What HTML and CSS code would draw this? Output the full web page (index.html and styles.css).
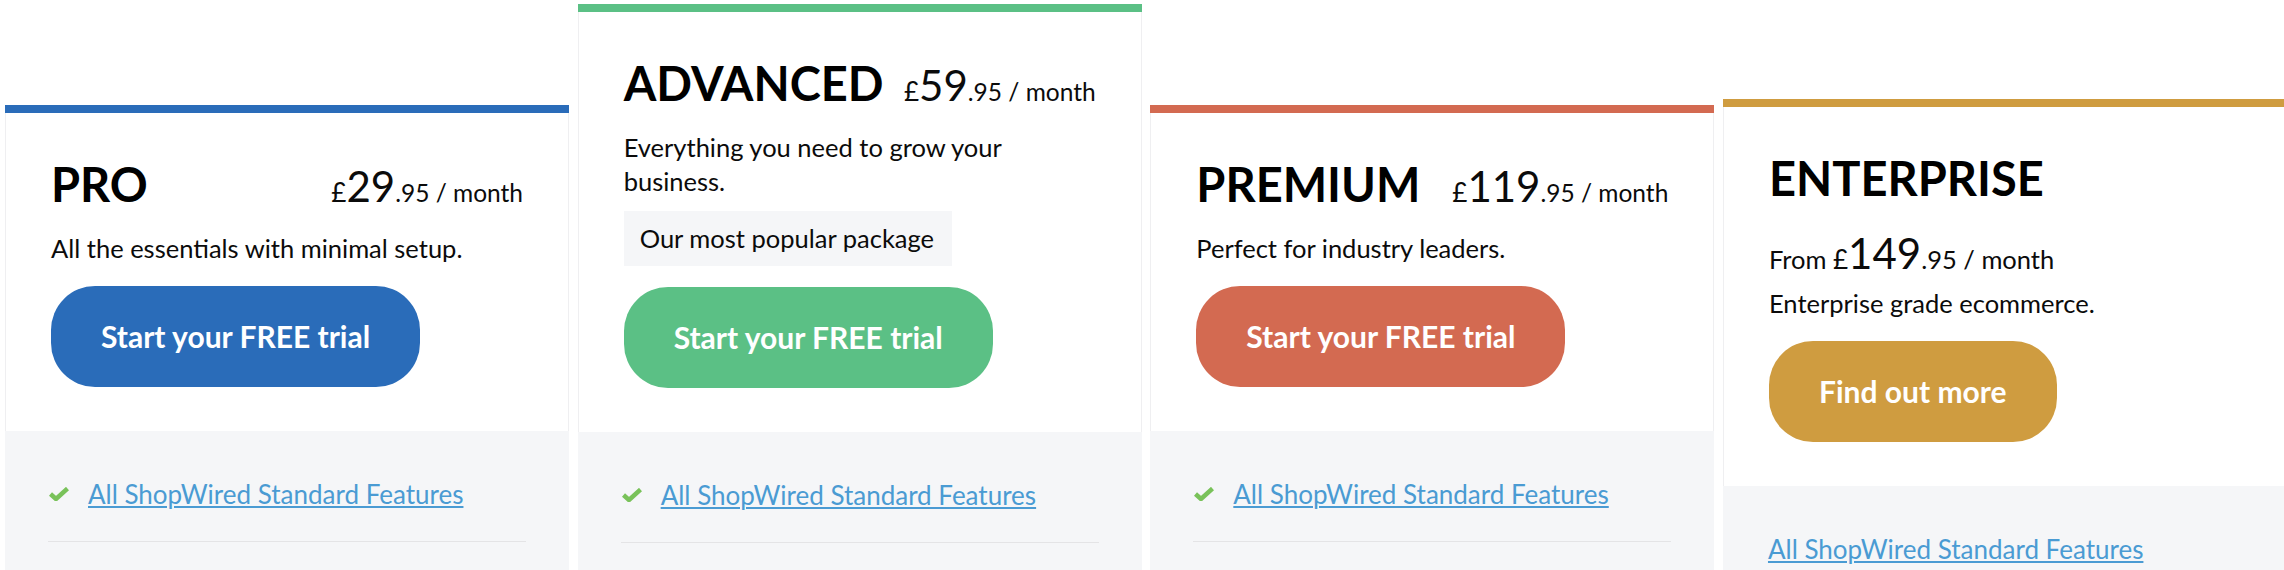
FILE: index.html
```html
<!DOCTYPE html>
<html lang="en">
<head>
<meta charset="utf-8">
<title>Pricing plans</title>
<link rel="stylesheet" href="styles.css">
</head>
<body>
<div class="plans">
  <div class="card card--pro">
    <div class="card-bar"></div>
    <div class="card-head">
      <div class="head-row">
        <h2 class="title">PRO</h2>
        <div class="price"><span class="cur">£</span><span class="big">29</span>.95 / month</div>
      </div>
      <p class="desc">All the essentials with minimal setup.</p>
      <a class="btn" href="#">Start your FREE trial</a>
    </div>
    <div class="card-body">
      <ul class="features">
        <li class="feature">
          <svg class="check" viewBox="0 0 20 14" width="20" height="14"><polyline points="1.5,7 7,12 18.5,1.5" /></svg>
          <a class="feature-link" href="#">All ShopWired Standard Features</a>
        </li>
      </ul>
    </div>
  </div>

  <div class="card card--advanced">
    <div class="card-bar"></div>
    <div class="card-head">
      <div class="head-row">
        <h2 class="title">ADVANCED</h2>
        <div class="price"><span class="cur">£</span><span class="big">59</span>.95 / month</div>
      </div>
      <p class="desc">Everything you need to grow your business.</p>
      <div class="popular">Our most popular package</div>
      <a class="btn" href="#">Start your FREE trial</a>
    </div>
    <div class="card-body">
      <ul class="features">
        <li class="feature">
          <svg class="check" viewBox="0 0 20 14" width="20" height="14"><polyline points="1.5,7 7,12 18.5,1.5" /></svg>
          <a class="feature-link" href="#">All ShopWired Standard Features</a>
        </li>
      </ul>
    </div>
  </div>

  <div class="card card--premium">
    <div class="card-bar"></div>
    <div class="card-head">
      <div class="head-row">
        <h2 class="title">PREMIUM</h2>
        <div class="price"><span class="cur">£</span><span class="big">119</span>.95 / month</div>
      </div>
      <p class="desc">Perfect for industry leaders.</p>
      <a class="btn" href="#">Start your FREE trial</a>
    </div>
    <div class="card-body">
      <ul class="features">
        <li class="feature">
          <svg class="check" viewBox="0 0 20 14" width="20" height="14"><polyline points="1.5,7 7,12 18.5,1.5" /></svg>
          <a class="feature-link" href="#">All ShopWired Standard Features</a>
        </li>
      </ul>
    </div>
  </div>

  <div class="card card--enterprise">
    <div class="card-bar"></div>
    <div class="card-head">
      <div class="head-row">
        <h2 class="title">ENTERPRISE</h2>
      </div>
      <div class="price price-line">From <span class="cur">£</span><span class="big">149</span>.95 / month</div>
      <p class="desc">Enterprise grade ecommerce.</p>
      <a class="btn" href="#">Find out more</a>
    </div>
    <div class="card-body">
      <ul class="features">
        <li class="feature feature--plain">
          <a class="feature-link" href="#">All ShopWired Standard Features</a>
        </li>
      </ul>
    </div>
  </div>
</div>
</body>
</html>
```

FILE: styles.css
```css
html, body {
  margin: 0;
  padding: 0;
  overflow: hidden;
  background: #ffffff;
}

body {
  font-family: "Lato", "Liberation Sans", sans-serif;
  color: #0b0b0b;
}

.plans {
  display: flex;
  align-items: flex-start;
  gap: 8.66px;
  padding: 4px 0 0 5px;
  width: 2400px;
}

.card {
  flex: 0 0 564px;
  width: 564px;
}

.card--pro { margin-top: 101px; }
.card--advanced { margin-top: 0; }
.card--premium { margin-top: 101px; }
.card--enterprise { margin-top: 95px; }

.card-bar {
  height: 8px;
}

.card--pro .card-bar, .card--pro .btn { background: #2a6cb9; }
.card--advanced .card-bar, .card--advanced .btn { background: #5bc085; }
.card--premium .card-bar, .card--premium .btn { background: #d36a51; }
.card--enterprise .card-bar, .card--enterprise .btn { background: #cf9c40; }

.card-head {
  display: flex;
  flex-direction: column;
  align-items: flex-start;
  padding: 47px 45px 44px;
  background: #ffffff;
  border-left: 1px solid #efeff1;
  border-right: 1px solid #efeff1;
}

.head-row {
  align-self: stretch;
  display: flex;
  justify-content: space-between;
  align-items: baseline;
  height: 48px;
}

.title {
  margin: 0;
  font-size: 47px;
  line-height: 48px;
  font-weight: 700;
  color: #000;
}

.price {
  font-size: 24.5px;
  line-height: 28px;
  white-space: nowrap;
}

.price .big {
  font-size: 42px;
}

.price .cur {
  font-size: 26px;
}

.price-line {
  margin-top: 31px;
  line-height: 40px;
  font-size: 25.5px;
}

.desc {
  margin: 23px 0 0;
  font-size: 25.5px;
  line-height: 34px;
}

.price-line + .desc {
  margin-top: 7px;
}

.popular {
  margin-top: 13px;
  padding: 10px 18px 10px 16px;
  font-size: 25.5px;
  line-height: 35px;
  background: #f5f6f8;
}

.btn {
  margin-top: 21px;
  padding: 0 50px;
  height: 101px;
  line-height: 101px;
  border-radius: 44px;
  color: #ffffff;
  font-size: 30px;
  font-weight: 700;
  text-decoration: none;
  white-space: nowrap;
}

.card-body {
  background: #f5f6f8;
  padding: 16px 43px 80px;
}

.features {
  list-style: none;
  margin: 0;
  padding: 0;
}

.feature {
  display: flex;
  align-items: center;
  gap: 19px;
  padding: 30px 0 30px 1px;
  border-bottom: 1px solid #e4e4e6;
}

.feature--plain {
  padding-left: 2px;
  border-bottom-color: transparent;
}

.check {
  flex: 0 0 20px;
  fill: none;
  stroke: #79c25a;
  stroke-width: 4.5;
}

.feature-link {
  font-size: 26px;
  line-height: 34px;
  color: #4a9bd3;
  text-decoration: underline;
  text-underline-offset: 2px;
  text-decoration-thickness: 1.5px;
}
```
